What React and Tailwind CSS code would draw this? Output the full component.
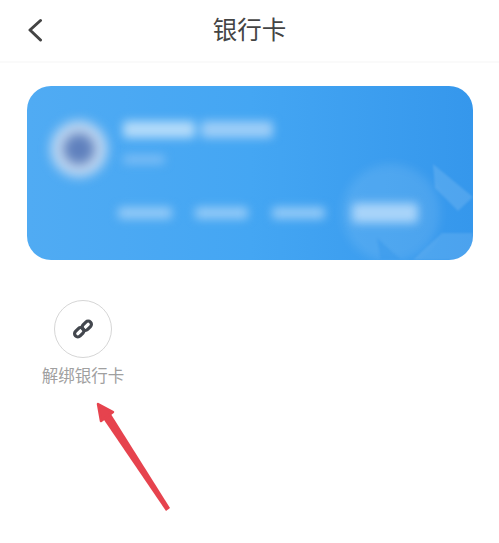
import React from 'react'

const font = { cjk: 'font-["Noto_Sans_CJK_SC","Noto_Sans",sans-serif]' }

const Card = () => (
  <div className="relative h-[174px] w-[446px] overflow-hidden rounded-[24px] bg-gradient-to-r from-[#50abf3] via-[#44a6f3] to-[#3597ec]">
    {/* watermark logo in the lower right corner */}
    <div className="absolute left-[315px] top-[78px] h-[98px] w-[98px] rounded-full bg-white/10 blur-[5px]" />
    <svg className="absolute inset-0 blur-[1px]" width="446" height="174" viewBox="0 0 446 174" fill="none">
      <path d="M406 78 L446 111 L431 125 L408 102 Z" fill="#ffffff" fillOpacity="0.13" />
      <path d="M350 152 L374 174 L354 174 Z" fill="#3597ec" fillOpacity="0.5" />
      <path d="M386 174 L415 147 L446 147 L446 174 Z" fill="#ffffff" fillOpacity="0.11" />
    </svg>

    <div className="relative flex items-start pt-[35px] pl-[24px]">
      <div className="flex h-[56px] w-[56px] shrink-0 items-center justify-center rounded-full bg-[#c6dbf2] blur-[6px]">
        <div className="h-[32px] w-[32px] rounded-full bg-[#5f80bd]" />
      </div>
      <div className="ml-[16px] flex flex-col">
        <div className="flex h-[17px] w-[150px] gap-[6px] blur-[5px]">
          <div className="h-full w-[72px] rounded-sm bg-[#b2daf9]" />
          <div className="h-full flex-1 rounded-sm bg-[#9ccdf7]" />
        </div>
        <div className="mt-[17px] h-[9px] w-[42px] rounded-sm bg-[#7cbdf5] blur-[5px]" />
      </div>
    </div>

    <div className="relative mt-[26px] ml-[91px] flex items-center">
      <div className="h-[12px] w-[54px] rounded-sm bg-[#93caf7] blur-[5px]" />
      <div className="ml-[23px] h-[12px] w-[53px] rounded-sm bg-[#93caf7] blur-[5px]" />
      <div className="ml-[24px] h-[12px] w-[53px] rounded-sm bg-[#93caf7] blur-[5px]" />
      <div className="ml-[27px] h-[20px] w-[66px] rounded-sm bg-[#a9d4f9] blur-[5px]" />
    </div>
  </div>
)

const App = () => (
  <div className={`relative h-[543px] w-[499px] overflow-hidden bg-white ${font.cjk}`}>
    <div className="relative flex h-[63px] items-center justify-center border-b-2 border-[#fafafa] pb-[2px]">
      <svg className="absolute left-[26px] top-[18px]" width="18" height="24" viewBox="0 0 18 24" fill="none">
        <path d="M14.5 2.5 L4 12 L14.5 22" stroke="#444444" strokeWidth="3" strokeLinecap="round" strokeLinejoin="round" />
      </svg>
      <span className="text-[24.5px] leading-none text-[#444444]">银行卡</span>
    </div>

    <div className="px-[27px] pt-[23px]">
      <Card />
    </div>

    <div className="mt-[40px] ml-[41px] flex w-[84px] flex-col items-center">
      <div className="flex h-[58px] w-[58px] items-center justify-center rounded-full border border-[#d6d6d6]">
        <svg width="24" height="24" viewBox="0 0 24 24" fill="none" stroke="#43474e" strokeWidth="3.2">
          <rect x="3" y="12" width="10.5" height="6.5" rx="3.25" transform="rotate(-45 8.25 15.25)" />
          <rect x="10.5" y="5.5" width="10.5" height="6.5" rx="3.25" transform="rotate(-45 15.75 8.75)" />
        </svg>
      </div>
      <span className="mt-[7px] whitespace-nowrap text-[16.5px] leading-[20px] text-[#a0a0a0]">解绑银行卡</span>
    </div>

    {/* red annotation arrow drawn over the page */}
    <svg className="absolute left-0 top-0" width="499" height="543" viewBox="0 0 499 543" fill="none">
      <path d="M102 417 L109 411 L170 508 L166 511 Z" fill="#e6434e" />
      <path d="M98 404 L113 412 L101 421 Z" fill="#e6434e" stroke="#e6434e" strokeWidth="2.5" strokeLinejoin="round" />
    </svg>
  </div>
)

export default App
